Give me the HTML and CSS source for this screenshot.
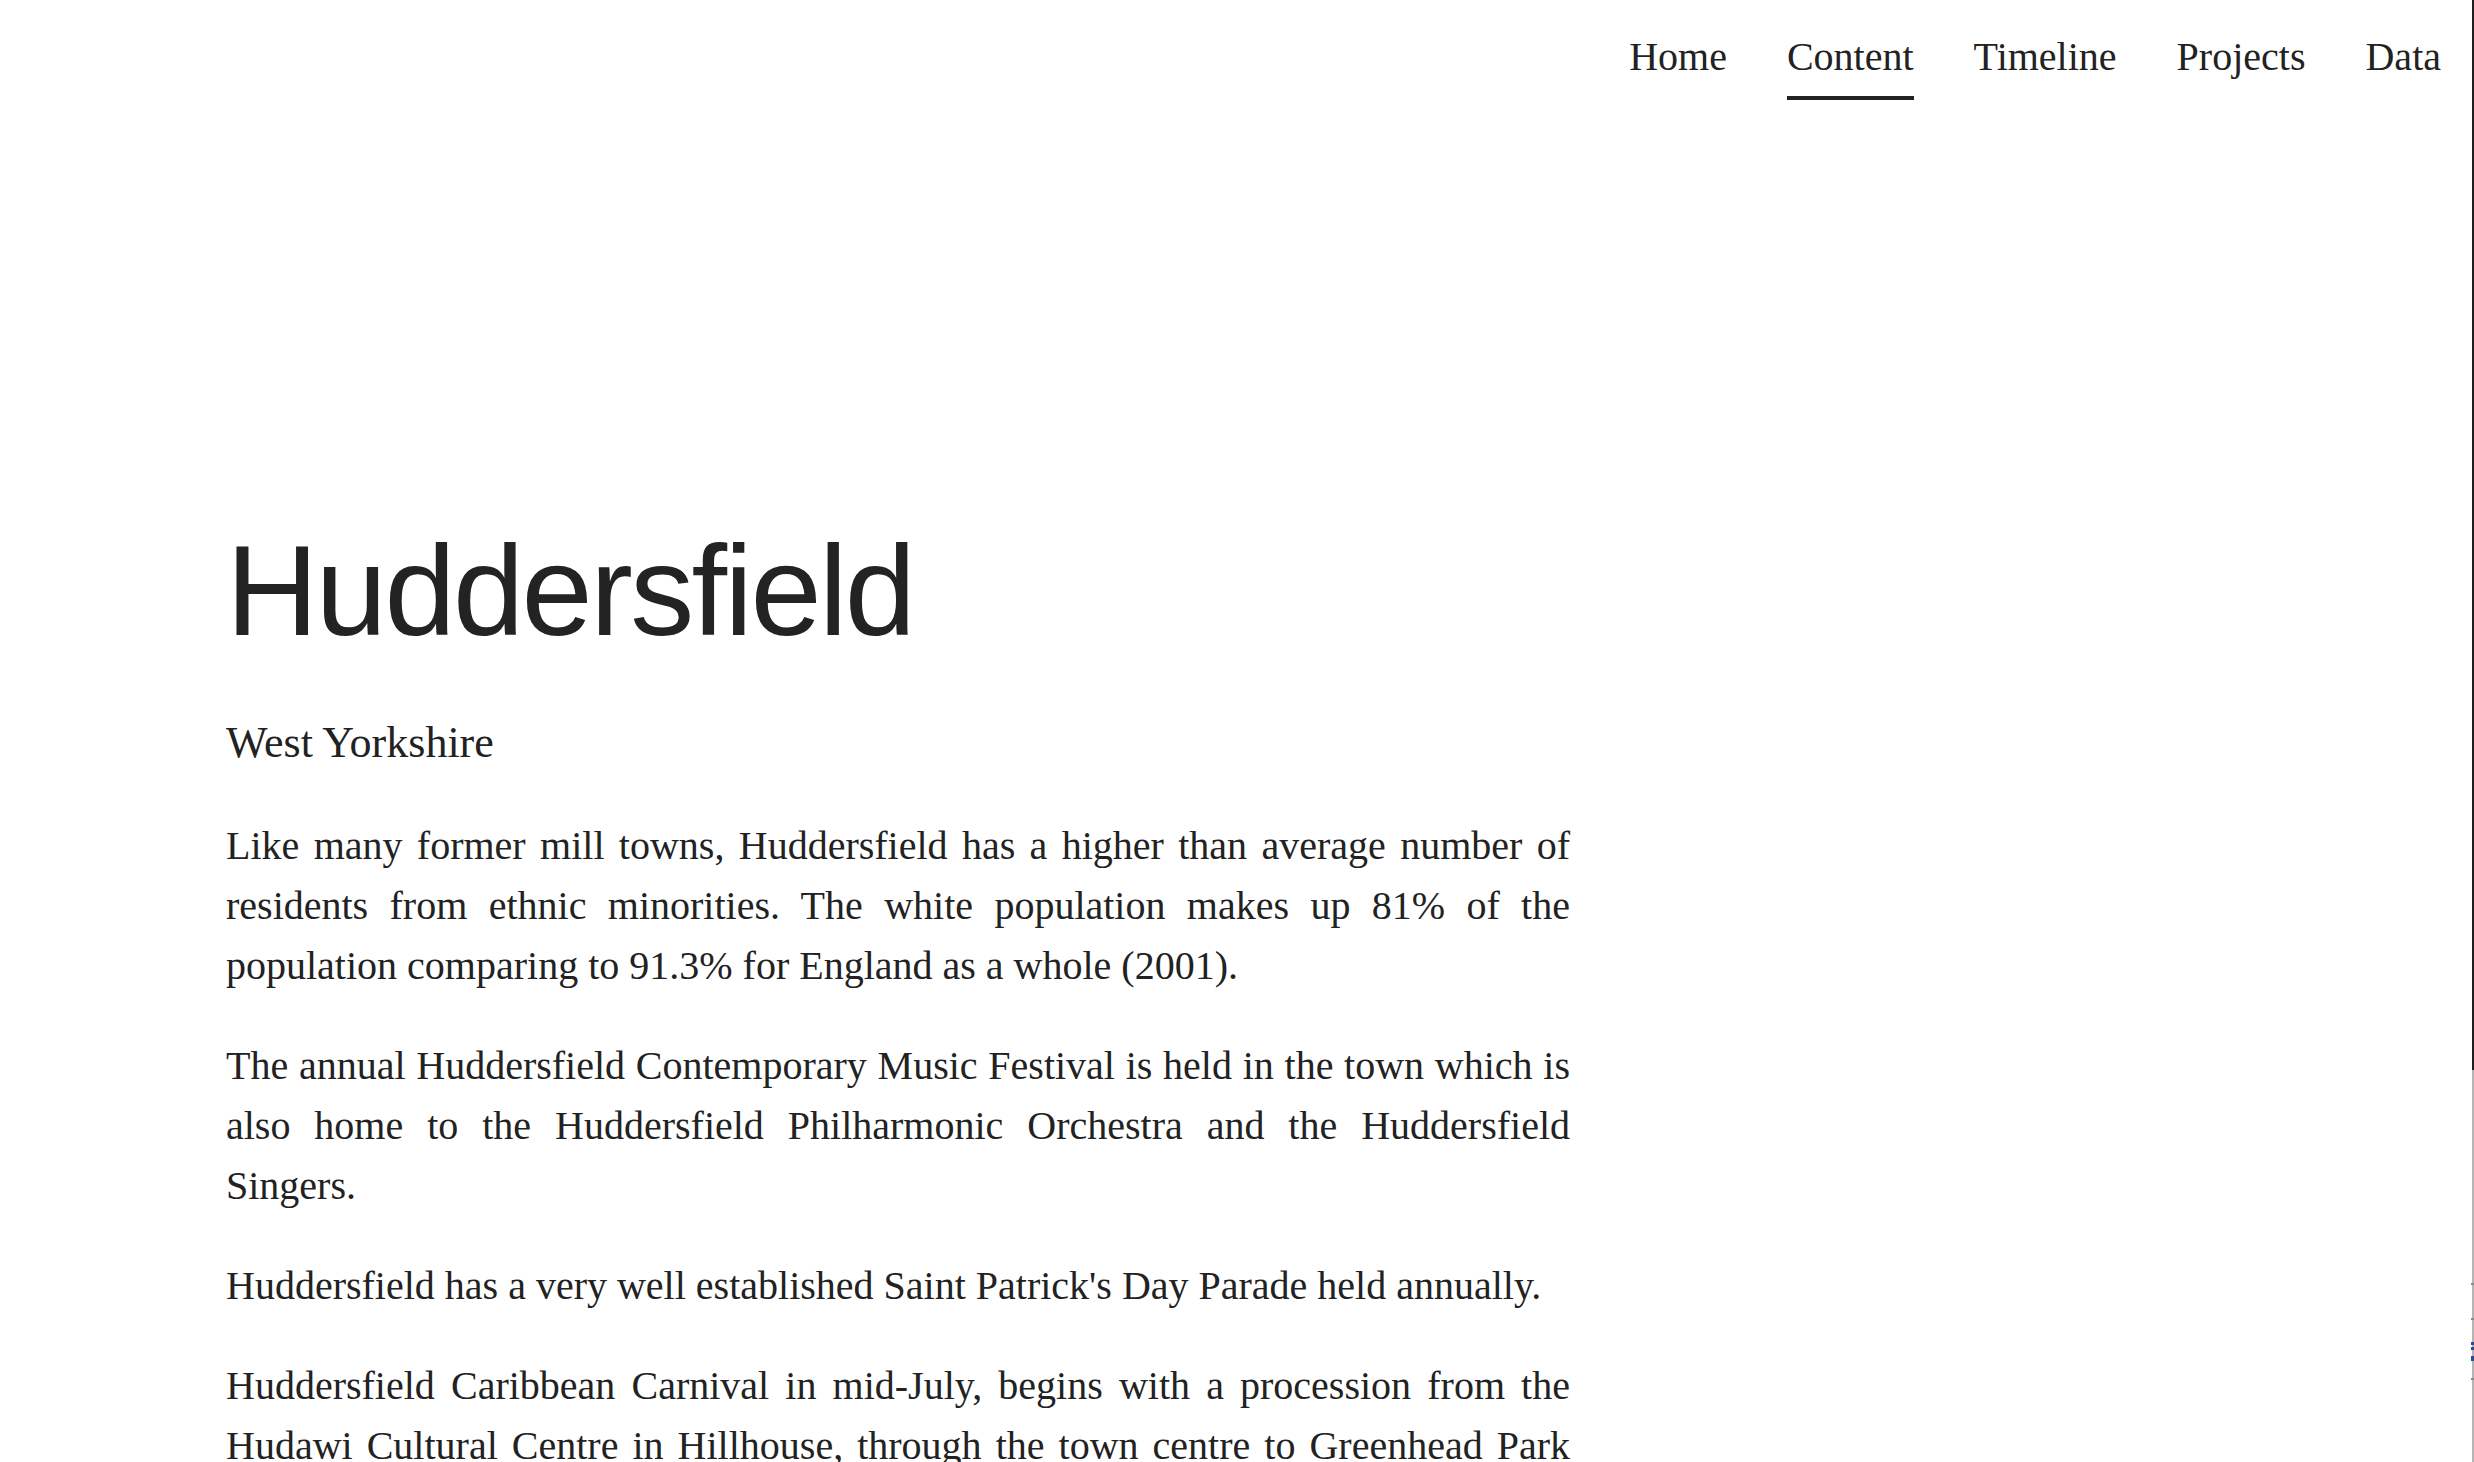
FILE: index.html
```html
<!DOCTYPE html>
<html lang="en">
<head>
<meta charset="utf-8">
<title>Huddersfield</title>
<link rel="stylesheet" href="styles.css">
</head>
<body>
<header class="site-header">
  <nav class="main-nav">
    <a class="nav-link" href="#">Home</a>
    <a class="nav-link is-active" href="#">Content</a>
    <a class="nav-link" href="#">Timeline</a>
    <a class="nav-link" href="#">Projects</a>
    <a class="nav-link" href="#">Data</a>
  </nav>
</header>
<main class="page">
  <article class="entry">
    <h1 class="entry-title">Huddersfield</h1>
    <h2 class="entry-region">West Yorkshire</h2>
    <p class="entry-text">Like many former mill towns, Huddersfield has a higher than average number of residents from ethnic minorities. The white population makes up 81% of the population comparing to 91.3% for England as a whole (2001).</p>
    <p class="entry-text">The annual Huddersfield Contemporary Music Festival is held in the town which is also home to the Huddersfield Philharmonic Orchestra and the Huddersfield Singers.</p>
    <p class="entry-text">Huddersfield has a very well established Saint Patrick's Day Parade held annually.</p>
    <p class="entry-text">Huddersfield Caribbean Carnival in mid-July, begins with a procession from the Hudawi Cultural Centre in Hillhouse, through the town centre to Greenhead Park where the festivities continue with music, food stalls and performances throughout the day.</p>
  </article>
</main>
<div class="edge-rail">
  <div class="edge-progress"></div>
  <div class="edge-marks">
    <span class="edge-mark grey"></span>
    <span class="edge-mark grey"></span>
    <span class="edge-mark blue"></span>
    <span class="edge-mark blue"></span>
    <span class="edge-mark blue wide"></span>
    <span class="edge-mark grey"></span>
  </div>
</div>
</body>
</html>
```
FILE: styles.css
```css
html, body {
  margin: 0;
  padding: 0;
  background: #ffffff;
  color: #222222;
}

body {
  font-family: "Liberation Serif", "Times New Roman", serif;
  overflow: hidden;
  height: 1462px;
}

.site-header {
  display: flex;
  justify-content: flex-end;
  padding: 37px 33px 0 0;
}

.main-nav {
  display: flex;
  gap: 60px;
}

.nav-link {
  font-family: "Liberation Serif", "Times New Roman", serif;
  font-size: 40px;
  line-height: 40px;
  color: #222222;
  text-decoration: none;
  padding-bottom: 19px;
  border-bottom: 4px solid transparent;
}

.nav-link.is-active {
  border-bottom-color: #222222;
}

.page {
  padding: 427px 0 0 226px;
}

.entry {
  width: 1344px;
}

.entry-title {
  margin: 0;
  font-family: "Liberation Sans", Arial, Helvetica, sans-serif;
  font-weight: 400;
  font-size: 128px;
  line-height: 128px;
  letter-spacing: -2.6px;
  color: #232323;
}

.entry-region {
  margin: 56px 0 0;
  font-family: "Liberation Serif", "Times New Roman", serif;
  font-weight: 400;
  font-size: 44px;
  line-height: 63px;
  color: #222222;
}

.entry-text {
  margin: 42px 0 0;
  font-size: 40px;
  line-height: 60px;
  text-align: justify;
  color: #222222;
}

.entry-text + .entry-text {
  margin-top: 40px;
}

.edge-rail {
  position: fixed;
  top: 0;
  right: 0;
  width: 2px;
  height: 1462px;
  background: #b4b4b4;
}

.edge-progress {
  width: 2px;
  height: 1070px;
  background: #1f1f22;
}

.edge-marks {
  position: absolute;
  top: 1283px;
  right: 0;
  width: 3px;
}

.edge-mark {
  position: absolute;
  right: 0;
  width: 3px;
  height: 2px;
}

.edge-mark.grey { background: #8a8a8a; }
.edge-mark.blue { background: #2a4a9a; height: 3px; }
.edge-mark.wide { height: 5px; }

.edge-mark:nth-child(1) { top: 0; }
.edge-mark:nth-child(2) { top: 35px; }
.edge-mark:nth-child(3) { top: 59px; }
.edge-mark:nth-child(4) { top: 64px; }
.edge-mark:nth-child(5) { top: 73px; }
.edge-mark:nth-child(6) { top: 95px; }
```
